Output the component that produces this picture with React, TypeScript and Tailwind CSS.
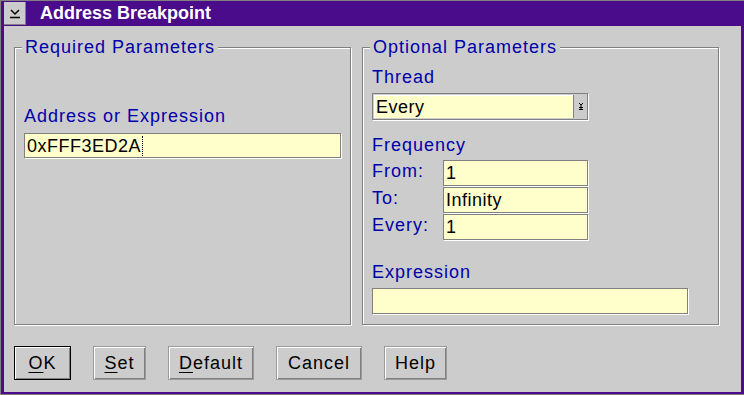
import React from 'react';

const font = { fontFamily: '"Liberation Sans", Arial, sans-serif' };

function Group({ title, className, children }: { title: string; className: string; children: React.ReactNode }) {
  return (
    <div className={`relative border border-[#808080] shadow-[1px_1px_0_#ffffff,inset_1px_1px_0_#ffffff] ${className}`}>
      <span className="absolute left-[7px] top-[-12px] bg-[#cccccc] px-[3px] text-[18px] leading-[22px] tracking-[1px] text-[#0000aa]">
        {title}
      </span>
      {children}
    </div>
  );
}

function Field({ value, className, caret }: { value?: string; className: string; caret?: boolean }) {
  return (
    <div className={`flex items-center border border-[#808080] bg-[#ffffcc] px-[2px] shadow-[1px_1px_0_#ffffff] text-[18px] leading-[22px] tracking-[0.5px] text-black ${className}`}>
      <span>{value}</span>
      {caret && <span className="ml-[1px] h-[20px] border-l border-dotted border-black" />}
    </div>
  );
}

function Label({ text, className = '' }: { text: string; className?: string }) {
  return <div className={`text-[18px] leading-[22px] tracking-[1px] text-[#0000aa] ${className}`}>{text}</div>;
}

function Btn({ label, u, width, primary }: { label: string; u?: number; width: string; primary?: boolean }) {
  const border = primary
    ? 'border border-black shadow-[inset_1px_1px_0_#ffffff,inset_-1px_-1px_0_#808080]'
    : 'border border-[#9a9a9a] shadow-[inset_1px_1px_0_#ffffff,inset_-1px_-1px_0_#808080]';
  return (
    <button className={`flex h-[34px] items-center justify-center bg-[#cccccc] text-[18px] tracking-[1px] text-black ${border} ${width}`}>
      {u === undefined ? (
        label
      ) : (
        <span>
          <span className="underline underline-offset-[3px]">{label[u]}</span>
          {label.slice(u + 1)}
        </span>
      )}
    </button>
  );
}

export default function App() {
  return (
    <div style={font} className="flex h-[395px] w-[744px] flex-col border-l border-t border-b border-[#808080] bg-[#4b0c8c] px-[3px] pr-[3px] pb-[2px]">
      <div className="flex h-[25px] items-center">
        <div className="flex h-[23px] w-[22px] items-center justify-center bg-[#cccccc] shadow-[inset_-1px_-1px_0_#808080]">
          <svg width="12" height="10" viewBox="0 0 12 10">
            <polyline points="2,1 6,5 10,1" fill="none" stroke="black" strokeWidth="1.5" />
            <line x1="1" y1="8.5" x2="11" y2="8.5" stroke="black" strokeWidth="1.5" />
          </svg>
        </div>
        <div className="ml-[14px] text-[18px] font-bold text-white">Address Breakpoint</div>
      </div>

      <div className="flex flex-1 flex-col bg-[#cccccc] pl-[10px] pr-[20px] pt-[21px]">
        <div className="flex h-[278px] gap-[11px]">
          <Group title="Required Parameters" className="w-[337px] px-[9px] pt-[57px]">
            <Label text="Address or Expression" />
            <Field value="0xFFF3ED2A" caret className="mt-[6px] h-[25px] w-[317px]" />
          </Group>

          <Group title="Optional Parameters" className="w-[357px] px-[9px] pt-[18px]">
            <Label text="Thread" />
            <div className="mt-[5px] flex h-[27px] w-[216px] border border-[#808080] shadow-[1px_1px_0_#ffffff]">
              <div className="my-[1px] ml-[1px] mr-[1px] flex flex-1 items-center border-r border-[#808080] bg-[#ffffcc] px-[2px] text-[18px] leading-[22px] tracking-[0.5px] text-black shadow-[inset_1px_1px_0_#ffffff]">
                Every
              </div>
              <div className="flex w-[12px] items-center justify-center">
                <svg width="6" height="9" viewBox="0 0 6 9">
                  <polyline points="1,1 3,3 5,1" fill="none" stroke="black" strokeWidth="1" />
                  <line x1="3" y1="3" x2="3" y2="8" stroke="black" strokeWidth="1" />
                  <line x1="1" y1="5.5" x2="5" y2="5.5" stroke="black" strokeWidth="1" />
                  <line x1="1" y1="7.5" x2="5" y2="7.5" stroke="black" strokeWidth="1" />
                </svg>
              </div>
            </div>

            <Label text="Frequency" className="mt-[14px]" />
            <div className="mt-[4px] flex flex-col">
              {[
                ['From:', '1'],
                ['To:', 'Infinity'],
                ['Every:', '1'],
              ].map(([l, v]) => (
                <div key={l} className="flex h-[27px] items-start">
                  <Label text={l} className="w-[71px]" />
                  <Field value={v} className="h-[26px] w-[145px]" />
                </div>
              ))}
            </div>

            <Label text="Expression" className="mt-[20px]" />
            <Field className="mt-[5px] h-[26px] w-[316px]" />
          </Group>
        </div>

        <div className="mt-[21px] flex gap-[22px]">
          <Btn label="OK" u={0} width="w-[57px]" primary />
          <Btn label="Set" u={0} width="w-[53px]" />
          <Btn label="Default" u={0} width="w-[86px]" />
          <Btn label="Cancel" width="w-[86px]" />
          <Btn label="Help" width="w-[63px]" />
        </div>
      </div>
    </div>
  );
}
